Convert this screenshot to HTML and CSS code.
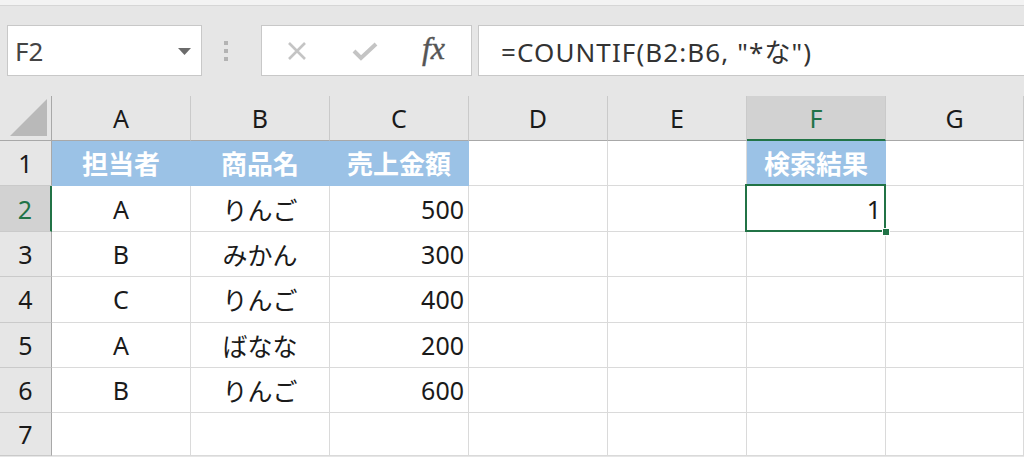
FILE: index.html
```html
<!DOCTYPE html>
<html lang="ja">
<head>
  <meta charset="UTF-8">
  <title>COUNTIF</title>
  <link rel="stylesheet" href="styles.css">
</head>
<body>
  <div class="top-edge"></div>

  <div class="formula-bar">
    <div class="name-box">
      <span>F2</span>
      <svg class="caret" width="13" height="7" viewBox="0 0 13 7"><path d="M0 0h13L6.5 7z" fill="#6b6b6b"/></svg>
    </div>
    <div class="grip"><i></i><i></i><i></i></div>
    <div class="fn-buttons">
      <svg width="22" height="22" viewBox="0 0 22 22"><path d="M3 3l16 16M19 3L3 19" stroke="#c4c4c4" stroke-width="2.6" fill="none"/></svg>
      <svg width="26" height="22" viewBox="0 0 26 22"><path d="M2 11l7 7L24 4" stroke="#c4c4c4" stroke-width="4" fill="none"/></svg>
      <span class="fx">fx</span>
    </div>
    <div class="formula">=COUNTIF(B2:B6, "*な")</div>
  </div>

  <div class="sheet">
    <div class="corner">
      <svg width="38" height="37" viewBox="0 0 38 37"><path d="M37 0v37H0z" fill="#b9b9b9"/></svg>
    </div>
    <div class="col-head">A</div>
    <div class="col-head">B</div>
    <div class="col-head">C</div>
    <div class="col-head">D</div>
    <div class="col-head">E</div>
    <div class="col-head active">F</div>
    <div class="col-head">G</div>

    <div class="row-head">1</div>
    <div class="cell title">担当者</div>
    <div class="cell title">商品名</div>
    <div class="cell title">売上金額</div>
    <div class="cell"></div>
    <div class="cell"></div>
    <div class="cell title">検索結果</div>
    <div class="cell"></div>

    <div class="row-head active">2</div>
    <div class="cell">A</div>
    <div class="cell">りんご</div>
    <div class="cell num">500</div>
    <div class="cell"></div>
    <div class="cell"></div>
    <div class="cell num selected">1<span class="handle"></span></div>
    <div class="cell"></div>

    <div class="row-head">3</div>
    <div class="cell">B</div>
    <div class="cell">みかん</div>
    <div class="cell num">300</div>
    <div class="cell"></div>
    <div class="cell"></div>
    <div class="cell"></div>
    <div class="cell"></div>

    <div class="row-head">4</div>
    <div class="cell">C</div>
    <div class="cell">りんご</div>
    <div class="cell num">400</div>
    <div class="cell"></div>
    <div class="cell"></div>
    <div class="cell"></div>
    <div class="cell"></div>

    <div class="row-head">5</div>
    <div class="cell">A</div>
    <div class="cell">ばなな</div>
    <div class="cell num">200</div>
    <div class="cell"></div>
    <div class="cell"></div>
    <div class="cell"></div>
    <div class="cell"></div>

    <div class="row-head">6</div>
    <div class="cell">B</div>
    <div class="cell">りんご</div>
    <div class="cell num">600</div>
    <div class="cell"></div>
    <div class="cell"></div>
    <div class="cell"></div>
    <div class="cell"></div>

    <div class="row-head">7</div>
    <div class="cell"></div>
    <div class="cell"></div>
    <div class="cell"></div>
    <div class="cell"></div>
    <div class="cell"></div>
    <div class="cell"></div>
    <div class="cell"></div>
  </div>
</body>
</html>
```

FILE: styles.css
```css
* {
  box-sizing: border-box;
}

body {
  margin: 0;
  width: 1024px;
  height: 457px;
  overflow: hidden;
  background-color: #e6e6e6;
  font-family: "Noto Sans", "Noto Sans CJK JP", sans-serif;
  color: #1a1a1a;
}

.top-edge {
  height: 6px;
  background-color: #f3f3f3;
  border-bottom: 1px solid #d6d6d6;
}

.formula-bar {
  display: flex;
  align-items: center;
  height: 90px;
  padding: 19px 0 20px 7px;
}

.name-box,
.fn-buttons,
.formula {
  height: 51px;
  background-color: #fff;
  border: 1px solid #c8c8c8;
}

.name-box {
  display: flex;
  align-items: center;
  justify-content: space-between;
  width: 195px;
  padding: 0 10px 0 7px;
  font-size: 26px;
  color: #444;
}

.caret {
  margin-top: 2px;
}

.grip {
  display: flex;
  flex-direction: column;
  gap: 4px;
  width: 59px;
  padding-left: 22px;
}

.grip i {
  width: 4px;
  height: 4px;
  background-color: #b3b3b3;
}

.fn-buttons {
  display: flex;
  align-items: center;
  justify-content: space-between;
  width: 211px;
  padding: 0 26px 0 24px;
}

.fx {
  font-family: "Liberation Serif", serif;
  font-style: italic;
  font-size: 32px;
  color: #555;
  margin-top: -4px;
  -webkit-text-stroke: 0.4px #555;
}

.formula {
  flex: 1;
  display: flex;
  align-items: center;
  margin-left: 6px;
  margin-right: -10px;
  padding-left: 22px;
  font-size: 26px;
  letter-spacing: 1.1px;
  color: #333;
}

.sheet {
  display: grid;
  grid-template-columns: 52px repeat(6, 139px) 1fr;
  grid-template-rows: 45px repeat(6, 45.4px) 1fr;
  height: 360px;
  background-color: #fff;
  font-size: 25px;
}

.corner {
  display: flex;
  align-items: flex-end;
  justify-content: flex-end;
  padding: 0 3px 4px 0;
  background-color: #e6e6e6;
  border-right: 1px solid #a8a8a8;
  border-bottom: 1px solid #a8a8a8;
}

.col-head,
.row-head {
  display: flex;
  align-items: center;
  justify-content: center;
  background-color: #e6e6e6;
  color: #1a1a1a;
}

.col-head {
  border-right: 1px solid #cacaca;
  border-bottom: 1px solid #a8a8a8;
}

.row-head {
  border-right: 1px solid #a8a8a8;
  border-bottom: 1px solid #cacaca;
}

.col-head.active {
  background-color: #d2d2d2;
  color: #217346;
  border-bottom: 2px solid #217346;
}

.row-head.active {
  background-color: #d2d2d2;
  color: #217346;
  border-right: 2px solid #217346;
}

.cell {
  display: flex;
  align-items: center;
  justify-content: center;
  border-right: 1px solid #dadada;
  border-bottom: 1px solid #dadada;
}

.cell.num {
  justify-content: flex-end;
  padding-right: 4px;
}

.cell.title {
  background-color: #9bc2e6;
  border-color: #9bc2e6;
  color: #fff;
  font-weight: bold;
  font-size: 26px;
}

.cell.selected {
  position: relative;
}

.cell.selected::after {
  content: "";
  position: absolute;
  inset: -2px -1px -1px -2px;
  border: 2px solid #217346;
}

.handle {
  position: absolute;
  right: -5px;
  bottom: -5px;
  width: 8px;
  height: 8px;
  background-color: #217346;
  border: 1px solid #fff;
  z-index: 1;
}
```
